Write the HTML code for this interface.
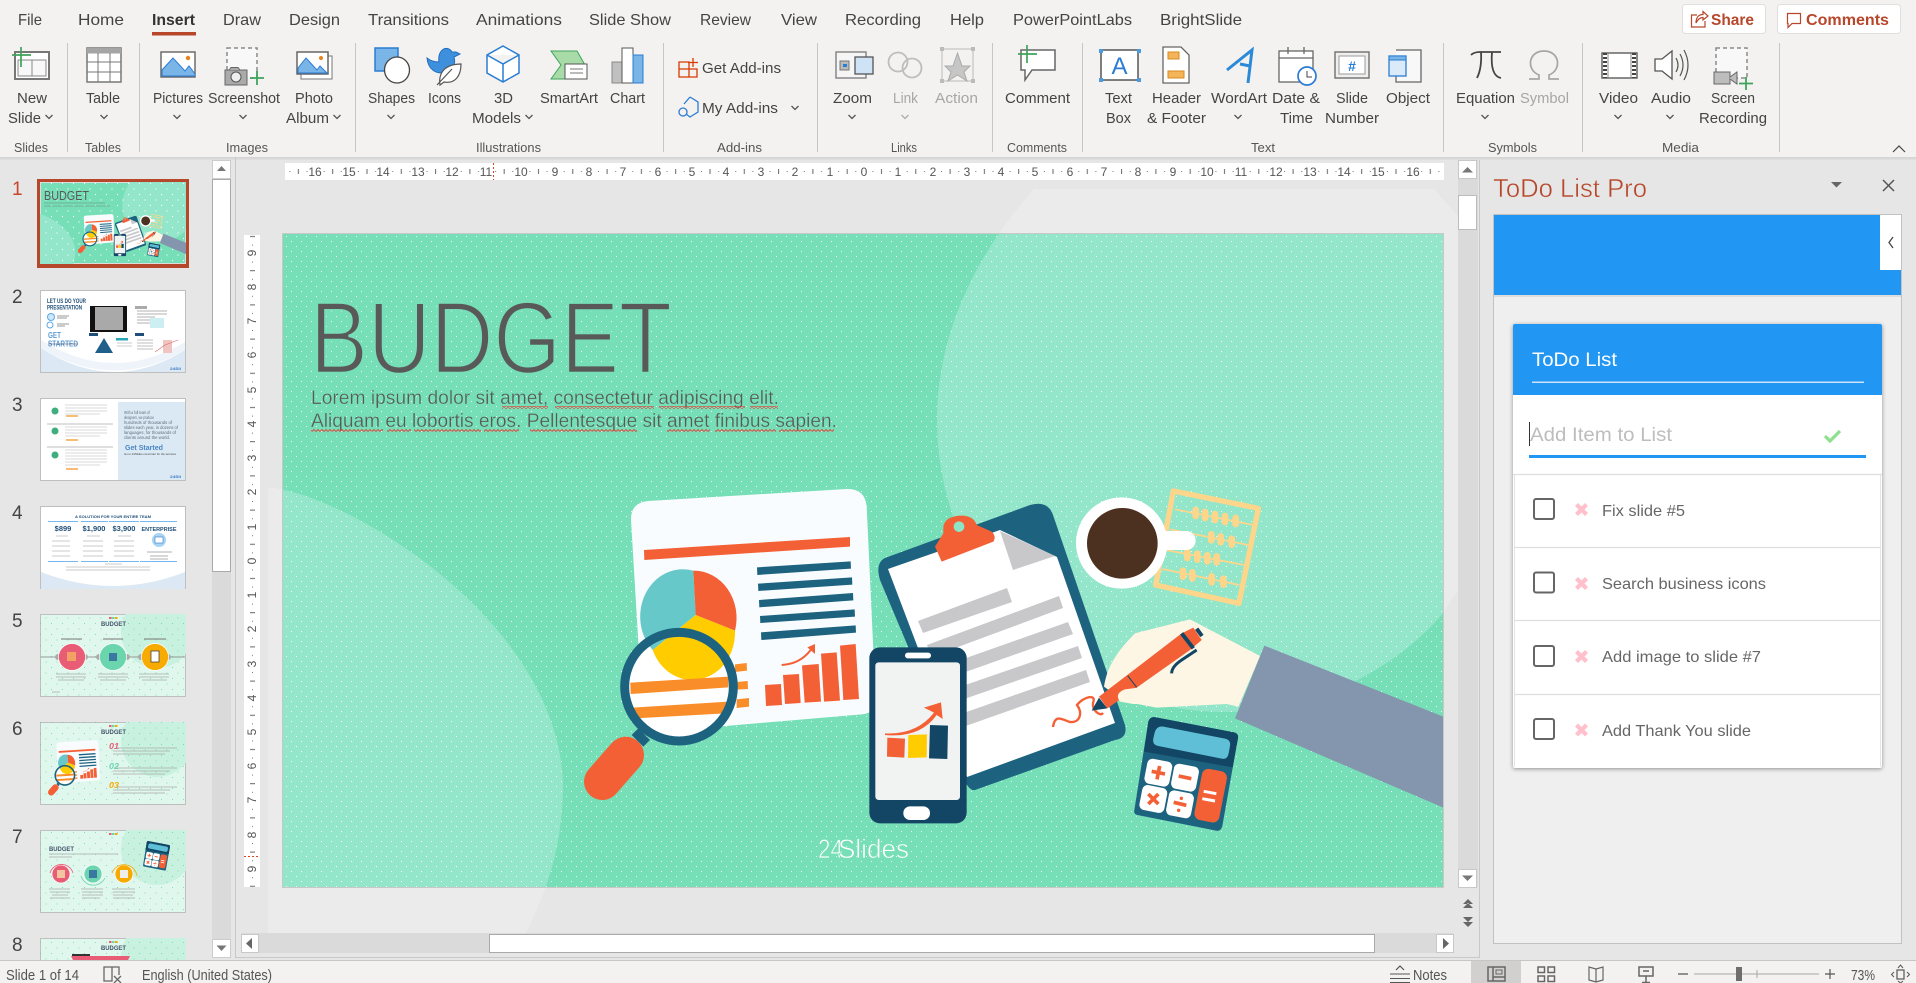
<!DOCTYPE html>
<html lang="en"><head><meta charset="utf-8"><title>ToDo List Pro</title>
<style>
html,body{margin:0;padding:0;background:#e6e6e6;overflow:hidden}
svg{display:block;font-family:"Liberation Sans",sans-serif}
.tab{font-size:16px;fill:#444}
.l{font-size:14.5px;fill:#444}
.d{font-size:14.5px;fill:#a6a6a6}
.g{font-size:13px;fill:#555}
.n{font-size:19px;fill:#444}
.r{font-size:12px;fill:#555;text-anchor:middle}
.i{font-size:16px;fill:#666}
.s{font-size:14.5px;fill:#555}
</style></head><body>
<svg width="1916" height="983" viewBox="0 0 1916 983" xmlns="http://www.w3.org/2000/svg">
<defs>
<path id="ch" d="M-3.5,-2 L0,1.5 L3.5,-2" fill="none" stroke="#555" stroke-width="1.3"/>
<pattern id="dots" width="10" height="10" patternUnits="userSpaceOnUse"><rect x="1" y="1" width="1" height="1" fill="#fff" opacity=".85"/><rect x="6" y="6" width="1" height="1" fill="#fff" opacity=".85"/></pattern>
<pattern id="td1" width="11" height="11" patternUnits="userSpaceOnUse"><circle cx="2" cy="2" r=".6" fill="#fff"/><circle cx="7.5" cy="7.5" r=".6" fill="#fff"/></pattern>
<pattern id="td2" width="11" height="11" patternUnits="userSpaceOnUse"><circle cx="2" cy="2" r=".45" fill="#55d0a6"/><circle cx="7.5" cy="7.5" r=".45" fill="#55d0a6"/></pattern>
<pattern id="sq" width="4" height="3" patternUnits="userSpaceOnUse"><path d="M0,2.5 L2,.5 L4,2.5" fill="none" stroke="#e2403a" stroke-width=".9"/></pattern>
<pattern id="rh" x="864" y="163" width="34.3" height="17" patternUnits="userSpaceOnUse"><rect x="17" y="6" width="1" height="5" fill="#666"/><rect x="8.4" y="8" width="1" height="1" fill="#777"/><rect x="25.6" y="8" width="1" height="1" fill="#777"/></pattern>
<pattern id="rv" x="244" y="561" width="16" height="34.2" patternUnits="userSpaceOnUse"><rect x="6" y="17" width="5" height="1" fill="#666"/><rect x="8" y="8.4" width="1" height="1" fill="#777"/><rect x="8" y="25.6" width="1" height="1" fill="#777"/></pattern>
<clipPath id="sl"><rect x="283" y="234" width="1160" height="653"/></clipPath>
<clipPath id="pb"><rect x="268" y="189" width="1190" height="744"/></clipPath>
<clipPath id="t1"><rect x="40" y="182" width="146" height="82"/></clipPath>
<clipPath id="t5"><rect x="40" y="614" width="146" height="83"/></clipPath>
<clipPath id="t6"><rect x="40" y="722" width="146" height="83"/></clipPath>
<clipPath id="t7"><rect x="40" y="830" width="146" height="83"/></clipPath>
<clipPath id="t8"><rect x="40" y="938" width="146" height="22"/></clipPath>
<clipPath id="t4"><rect x="40" y="506" width="146" height="83"/></clipPath>
<path id="bigS" d="M1034,189 L1434,189 L1458,216 L1458,590 L1444,612 C1400,665 1320,712 1225,712 C1065,712 937,580 937,420 C937,335 975,255 1034,189 Z"/>
<path id="leftS" d="M268,488 C330,488 555,610 563,782 C563,840 550,885 526,933 L268,933 Z"/>
<g id="chart" transform="translate(560,470) scale(.33333)">
 <path d="M213,150 Q212,97 265,93 L860,57 Q915,55 920,110 L947,690 Q948,730 905,733 L300,785 L240,600 Z" fill="#f8fcff"/>
 <circle cx="357" cy="650" r="165" fill="#fff"/>
 <path d="M252,240 L870,201 L870,230 L253,270Z" fill="#f46036"/>
 <path d="M407,435 L278,540 A128,142 0 0 1 400,302 Z" fill="#67c8c9"/>
 <path d="M407,435 L400,302 A128,142 0 0 1 525,482 Z" fill="#f46036"/>
 <path d="M407,435 L525,482 A128,142 0 0 1 278,540 Z" fill="#fc0"/>
 <g fill="#1d6380"><path d="M591,292 L872,274 L873,296 L592,315Z"/><path d="M594,341 L876,322 L877,344 L595,363Z"/><path d="M597,390 L879,369 L880,391 L598,412Z"/><path d="M600,438 L884,418 L885,440 L601,459Z"/><path d="M603,487 L887,466 L888,488 L604,510Z"/></g>
 <g fill="#f98d29"><path d="M525,583 L560,579 L561,602 L525,606Z"/><path d="M530,636 L563,633 L564,657 L530,659Z"/><path d="M530,688 L567,684 L567,710 L530,714Z"/><path d="M211,638 L505,620 L505,652 L212,672Z"/><path d="M219,713 L505,695 L495,730 L225,745Z"/></g>
 <circle cx="357" cy="650" r="163" fill="none" stroke="#1d6380" stroke-width="27"/>
 <path d="M235,775 L270,810 L250,830 L215,795Z" fill="#1d6380"/>
 <line x1="197" y1="855" x2="127" y2="935" stroke="#f46036" stroke-width="110" stroke-linecap="round"/>
 <g fill="#f46036"><path d="M615,645 L663,642 L666,705 L618,708Z"/><path d="M669,615 L717,612 L722,699 L675,702Z"/><path d="M726,586 L776,582 L783,695 L734,698Z"/><path d="M783,551 L830,547 L840,692 L792,695Z"/><path d="M840,527 L887,522 L897,687 L850,690Z"/><path d="M765,522 L765,552 L742,532Z"/></g>
 <path d="M665,585 Q720,582 752,540" fill="none" stroke="#f46036" stroke-width="6"/>
</g>
<g id="board">
 <path d="M885,558 L1030,505 Q1048,500 1053,515 L1125,725 Q1128,738 1115,740 L975,790 Q968,792 960,770 L880,580 Q875,563 885,558 Z" fill="#1d6380"/>
 <path d="M888,569 L1000,530 L1057,557 L1115,723 L967,777 Z" fill="#fff"/>
 <path d="M1000,531 L1055,556 L1013,570Z" fill="#c8c8ca"/>
 <g fill="#c8c8ca"><path d="M918,621 L1007,588 L1012,602 L923,633Z"/><path d="M927,645 L1059,596 L1063,608 L931,657Z"/><path d="M935,669 L1068,622 L1073,634 L940,681Z"/><path d="M945,692 L1078,646 L1082,658 L950,704Z"/><path d="M955,716 L1086,670 L1090,682 L960,728Z"/></g>
 <g transform="translate(560,470) scale(.33333)">
  <path d="M1125,230 L1150,190 L1150,170 Q1155,140 1200,137 Q1240,135 1250,165 L1295,185 Q1310,200 1300,215 L1145,275 Z" fill="#f46036"/>
  <circle cx="1197" cy="170" r="16" fill="#8de5c6"/>
 </g>
 <path d="M1053,727 C1055,713 1063,720 1070,722 C1080,723 1083,713 1077,705 C1083,697 1097,693 1093,703 C1092,710 1100,717 1103,713" fill="none" stroke="#f46036" stroke-width="2.4"/>
</g>
<g id="phone" transform="translate(560,470) scale(.33333)">
 <rect x="928" y="532" width="292" height="528" rx="32" fill="#134665"/>
 <rect x="946" y="577" width="254" height="413" rx="10" fill="#f1f3f2"/>
 <rect x="1035" y="548" width="78" height="17" rx="8" fill="#fff"/>
 <rect x="1030" y="1009" width="80" height="41" rx="20" fill="#fff"/>
 <path d="M982,803 L1035,806 L1033,863 L981,860Z" fill="#f46036"/>
 <path d="M1045,795 L1101,793 L1100,862 L1044,864Z" fill="#fc0"/>
 <path d="M1110,765 L1164,767 L1162,867 L1107,865Z" fill="#134665"/>
 <path d="M975,790 Q1070,795 1122,728 L1092,713 L1143,697 L1148,747 L1130,735 Q1080,805 975,795Z" fill="#f46036"/>
</g>
<g id="rest" transform="translate(1000,470) scale(.33333)">
 <path d="M520,63 L775,115 L717,400 L467,345Z" fill="none" stroke="#fdd68b" stroke-width="16" stroke-linejoin="round"/>
 <g stroke="#fdd68b" stroke-width="5"><path d="M525,118 L760,165M510,178 L745,225M497,240 L732,285M487,297 L718,345"/></g>
 <g stroke="#fdd68b" stroke-width="20" stroke-linecap="round"><path d="M587,120v18M615,126v18M645,132v18M675,138v18M707,144v18M634,193v18M662,199v18M695,206v18M562,246v18M592,251v18M622,256v18M650,259v18M549,302v18M577,307v18M635,319v18M670,326v18"/></g>
 <circle cx="365" cy="219" r="137" fill="#fff"/>
 <rect x="470" y="183" width="117" height="57" rx="28" fill="#fff"/>
 <circle cx="367" cy="220" r="106" fill="#4d3120"/>
 <path d="M312,650 C320,600 340,555 405,490 L570,448 L780,558 L715,710 L680,702 L470,713 L385,697 L340,670Z" fill="#fef6e4"/>
 <path d="M793,527 L1330,740 L1330,1013 L705,745Z" fill="#8495ae"/>
 <path d="M297,680 L545,490 L580,473 L605,510 L570,540 L322,715Z" fill="#f46036"/>
 <path d="M275,722 L297,683 L322,715Z" fill="#134665"/>
 <path d="M545,490 L580,535M590,476 L606,498" stroke="#134665" stroke-width="12" fill="none"/>
 <path d="M383,617 L410,652" stroke="#134665" stroke-width="3" fill="none"/>
 <path d="M590,540 L545,570 Q515,590 515,610" stroke="#134665" stroke-width="9" fill="none"/>
 <path d="M360,695 Q342,670 375,658 L515,640 L520,700 L400,702Z" fill="#fef6e4"/>
</g>
<g id="calc" transform="translate(1000,470) scale(.33333)">
 <path d="M468,742 L702,787 Q716,790 714,804 L667,1068 Q663,1085 648,1082 L412,1035 Q400,1032 403,1020 L445,755 Q450,738 468,742Z" fill="#1d6380"/>
 <path d="M468,742 L702,787 Q716,790 714,804 L698,892 L432,845 L445,755 Q450,738 468,742Z" fill="#134665"/>
 <path d="M490,770 L675,806 Q693,810 690,828 L686,850 Q682,870 665,866 L475,828 Q456,824 460,805 L464,788 Q470,767 490,770Z" fill="#5ebfd6"/>
 <g fill="#fff"><rect x="-38" y="-38" width="76" height="76" rx="16" transform="translate(475,908) rotate(11)"/><rect x="-38" y="-38" width="76" height="76" rx="16" transform="translate(555,923) rotate(11)"/><rect x="-38" y="-38" width="76" height="76" rx="16" transform="translate(460,987) rotate(11)"/><rect x="-38" y="-38" width="76" height="76" rx="16" transform="translate(540,1003) rotate(11)"/></g>
 <rect x="-38" y="-78" width="76" height="156" rx="20" fill="#f46036" transform="translate(632,977) rotate(11)"/>
 <g stroke="#f46036" stroke-width="11" fill="none"><path d="M455,904 L495,912M479,888 L471,928M536,918 L574,926M445,972 L475,1002M475,972 L445,1002M521,997 L559,1006"/></g>
 <circle cx="544" cy="985" r="5" fill="#f46036"/><circle cx="536" cy="1021" r="5" fill="#f46036"/>
 <path d="M611,964 L649,971M607,986 L645,993" stroke="#fff" stroke-width="9"/>
</g>
</defs>

<!-- base -->
<rect width="1916" height="983" fill="#e6e6e6"/>

<!-- ribbon -->
<rect width="1916" height="157" fill="#f3f2f1"/>
<rect y="157" width="1916" height="1.5" fill="#d4d4d4"/><rect y="158.5" width="1916" height="1.5" fill="#dedede"/>
<g class="tabs">
<text class="tab" x="18" y="25" textLength="24" lengthAdjust="spacingAndGlyphs">File</text>
<text class="tab" x="78" y="25" textLength="46" lengthAdjust="spacingAndGlyphs">Home</text>
<text class="tab" x="152" y="25" textLength="43" lengthAdjust="spacingAndGlyphs" style="font-weight:bold;fill:#333">Insert</text>
<text class="tab" x="223" y="25" textLength="38" lengthAdjust="spacingAndGlyphs">Draw</text>
<text class="tab" x="289" y="25" textLength="51" lengthAdjust="spacingAndGlyphs">Design</text>
<text class="tab" x="368" y="25" textLength="81" lengthAdjust="spacingAndGlyphs">Transitions</text>
<text class="tab" x="476" y="25" textLength="86" lengthAdjust="spacingAndGlyphs">Animations</text>
<text class="tab" x="589" y="25" textLength="82" lengthAdjust="spacingAndGlyphs">Slide Show</text>
<text class="tab" x="700" y="25" textLength="51" lengthAdjust="spacingAndGlyphs">Review</text>
<text class="tab" x="781" y="25" textLength="36" lengthAdjust="spacingAndGlyphs">View</text>
<text class="tab" x="845" y="25" textLength="76" lengthAdjust="spacingAndGlyphs">Recording</text>
<text class="tab" x="950" y="25" textLength="34" lengthAdjust="spacingAndGlyphs">Help</text>
<text class="tab" x="1013" y="25" textLength="119" lengthAdjust="spacingAndGlyphs">PowerPointLabs</text>
<text class="tab" x="1160" y="25" textLength="82" lengthAdjust="spacingAndGlyphs">BrightSlide</text>
</g>
<rect x="152" y="32" width="44" height="3.5" fill="#b7472a"/>

<!-- group separators -->
<path d="M67.5,43V152M139.5,43V152M355.5,43V152M663.5,43V152M817.5,43V152M992.5,43V152M1082.5,43V152M1443.5,43V152M1582.5,43V152M1779.5,43V152" stroke="#c8c6c4"/>

<!-- labels -->
<text class="l" x="17" y="103" textLength="30" lengthAdjust="spacingAndGlyphs">New</text>
<text class="l" x="8" y="123" textLength="33" lengthAdjust="spacingAndGlyphs">Slide</text>
<use href="#ch" x="49" y="117"/>
<text class="g" x="14" y="152" textLength="34" lengthAdjust="spacingAndGlyphs">Slides</text>
<text class="l" x="86" y="103" textLength="34" lengthAdjust="spacingAndGlyphs">Table</text><use href="#ch" x="104" y="117"/>
<text class="g" x="85" y="152" textLength="36" lengthAdjust="spacingAndGlyphs">Tables</text>
<text class="l" x="153" y="103" textLength="50" lengthAdjust="spacingAndGlyphs">Pictures</text><use href="#ch" x="177" y="117"/>
<text class="l" x="208" y="103" textLength="72" lengthAdjust="spacingAndGlyphs">Screenshot</text><use href="#ch" x="243" y="117"/>
<text class="l" x="295" y="103" textLength="38" lengthAdjust="spacingAndGlyphs">Photo</text>
<text class="l" x="286" y="123" textLength="43" lengthAdjust="spacingAndGlyphs">Album</text><use href="#ch" x="337" y="117"/>
<text class="g" x="226" y="152" textLength="42" lengthAdjust="spacingAndGlyphs">Images</text>
<text class="l" x="368" y="103" textLength="47" lengthAdjust="spacingAndGlyphs">Shapes</text><use href="#ch" x="391" y="117"/>
<text class="l" x="428" y="103" textLength="33" lengthAdjust="spacingAndGlyphs">Icons</text>
<text class="l" x="494" y="103" textLength="19" lengthAdjust="spacingAndGlyphs">3D</text>
<text class="l" x="472" y="123" textLength="49" lengthAdjust="spacingAndGlyphs">Models</text><use href="#ch" x="529" y="117"/>
<text class="l" x="540" y="103" textLength="58" lengthAdjust="spacingAndGlyphs">SmartArt</text>
<text class="l" x="610" y="103" textLength="35" lengthAdjust="spacingAndGlyphs">Chart</text>
<text class="g" x="476" y="152" textLength="65" lengthAdjust="spacingAndGlyphs">Illustrations</text>
<text class="l" x="702" y="73" textLength="79" lengthAdjust="spacingAndGlyphs">Get Add-ins</text>
<text class="l" x="702" y="113" textLength="76" lengthAdjust="spacingAndGlyphs">My Add-ins</text><use href="#ch" x="795" y="108"/>
<text class="g" x="717" y="152" textLength="45" lengthAdjust="spacingAndGlyphs">Add-ins</text>
<text class="l" x="833" y="103" textLength="39" lengthAdjust="spacingAndGlyphs">Zoom</text><use href="#ch" x="852" y="117"/>
<text class="d" x="893" y="103" textLength="25" lengthAdjust="spacingAndGlyphs">Link</text><use href="#ch" x="905" y="117" opacity=".45"/>
<text class="d" x="935" y="103" textLength="43" lengthAdjust="spacingAndGlyphs">Action</text>
<text class="g" x="891" y="152" textLength="26" lengthAdjust="spacingAndGlyphs">Links</text>
<text class="l" x="1005" y="103" textLength="65" lengthAdjust="spacingAndGlyphs">Comment</text>
<text class="g" x="1007" y="152" textLength="60" lengthAdjust="spacingAndGlyphs">Comments</text>
<text class="l" x="1105" y="103" textLength="27" lengthAdjust="spacingAndGlyphs">Text</text>
<text class="l" x="1106" y="123" textLength="25" lengthAdjust="spacingAndGlyphs">Box</text>
<text class="l" x="1152" y="103" textLength="49" lengthAdjust="spacingAndGlyphs">Header</text>
<text class="l" x="1147" y="123" textLength="59" lengthAdjust="spacingAndGlyphs">&amp; Footer</text>
<text class="l" x="1211" y="103" textLength="56" lengthAdjust="spacingAndGlyphs">WordArt</text><use href="#ch" x="1238" y="117"/>
<text class="l" x="1272" y="103" textLength="48" lengthAdjust="spacingAndGlyphs">Date &amp;</text>
<text class="l" x="1280" y="123" textLength="33" lengthAdjust="spacingAndGlyphs">Time</text>
<text class="l" x="1336" y="103" textLength="32" lengthAdjust="spacingAndGlyphs">Slide</text>
<text class="l" x="1325" y="123" textLength="54" lengthAdjust="spacingAndGlyphs">Number</text>
<text class="l" x="1386" y="103" textLength="44" lengthAdjust="spacingAndGlyphs">Object</text>
<text class="g" x="1251" y="152" textLength="24" lengthAdjust="spacingAndGlyphs">Text</text>
<text class="l" x="1456" y="103" textLength="59" lengthAdjust="spacingAndGlyphs">Equation</text><use href="#ch" x="1485" y="117"/>
<text class="d" x="1520" y="103" textLength="49" lengthAdjust="spacingAndGlyphs">Symbol</text>
<text class="g" x="1488" y="152" textLength="49" lengthAdjust="spacingAndGlyphs">Symbols</text>
<text class="l" x="1599" y="103" textLength="39" lengthAdjust="spacingAndGlyphs">Video</text><use href="#ch" x="1618" y="117"/>
<text class="l" x="1651" y="103" textLength="40" lengthAdjust="spacingAndGlyphs">Audio</text><use href="#ch" x="1670" y="117"/>
<text class="l" x="1711" y="103" textLength="44" lengthAdjust="spacingAndGlyphs">Screen</text>
<text class="l" x="1699" y="123" textLength="68" lengthAdjust="spacingAndGlyphs">Recording</text>
<text class="g" x="1662" y="152" textLength="37" lengthAdjust="spacingAndGlyphs">Media</text>
<path d="M1893,152 L1899,146 L1905,152" fill="none" stroke="#444" stroke-width="1.2"/>

<!-- Share / Comments -->
<rect x="1682.5" y="4.5" width="83" height="29" rx="3" fill="#fff" stroke="#e1dfdd"/>
<rect x="1777.5" y="4.5" width="123" height="29" rx="3" fill="#fff" stroke="#e1dfdd"/>
<path d="M1697,15H1691.5V27H1705V21M1696,23C1696,17 1699,14.500 1703,14.500V11.500L1708,16L1703,20V17.500C1700,17.500 1698,19 1696,23Z" fill="none" stroke="#b7472a" stroke-width="1.2"/>
<text x="1711" y="25" font-size="16" font-weight="bold" fill="#b7472a" textLength="43" lengthAdjust="spacingAndGlyphs">Share</text>
<path d="M1787.500,13.500H1800.500V23.500H1792L1788,27.500V23.500H1787.500Z" fill="none" stroke="#b7472a" stroke-width="1.2"/>
<text x="1806" y="25" font-size="16" font-weight="bold" fill="#b7472a" textLength="83" lengthAdjust="spacingAndGlyphs">Comments</text>

<!-- Ribbon icons -->
<g fill="none">
 <!-- new slide -->
 <rect x="15" y="52" width="34" height="27" fill="#fff" stroke="#777" stroke-width="2"/>
 <path d="M18,60H46V76H18ZM32,60V76" stroke="#888" fill="#f8f8f8"/>
 <path d="M21,47V67M12,55H31" stroke="#3fa45b" stroke-width="1.7"/>
 <!-- table -->
 <rect x="87" y="48" width="34" height="34" fill="#fff" stroke="#777" stroke-width="1.5"/>
 <rect x="87" y="48" width="34" height="5.500" fill="#a5a5a5"/>
 <path d="M98,53V82M110,53V82M87,62H121M87,72H121" stroke="#777"/>
 <!-- pictures -->
 <rect x="161" y="52" width="34" height="25" fill="#fff" stroke="#6d6d6d" stroke-width="1.5"/>
 <path d="M162,75V70L173,58L185,71L189,66L195,74V76H162Z" fill="#7ab5e8" stroke="#2b7cd3"/>
 <circle cx="188" cy="58" r="2.200" fill="#e8821e"/>
 <!-- screenshot -->
 <rect x="227" y="48" width="30" height="30" fill="#f8f8f8" stroke="#8a8a8a" stroke-width="1.500" stroke-dasharray="4 3"/>
 <rect x="225" y="70" width="22" height="15" fill="#aaa" stroke="#666"/>
 <path d="M229,70l2,-2.500h7l2,2.500" fill="#aaa" stroke="#666"/>
 <circle cx="236" cy="77" r="5" fill="#eee" stroke="#555"/>
 <path d="M257,71V85M250,78H264" stroke="#3fa45b" stroke-width="1.800"/>
 <!-- photo album -->
 <path d="M327,56H332V79H301V74" fill="#fff" stroke="#777"/>
 <rect x="297" y="52" width="31" height="22" fill="#fff" stroke="#666" stroke-width="1.500"/>
 <path d="M298,72V68L306,58L317,70L320,66L327,73H298Z" fill="#7ab5e8" stroke="#2b7cd3"/>
 <circle cx="321" cy="58" r="2" fill="#e8821e"/>
 <!-- shapes -->
 <rect x="375" y="48" width="23" height="23" fill="#7ab5e8" stroke="#2b7cd3" stroke-width="1.500"/>
 <ellipse cx="397" cy="70" rx="12.500" ry="13" fill="#fff" stroke="#444" stroke-width="1.300"/>
 <!-- icons -->
 <path d="M427,58 Q432,62 439,62 C437,50 447,44 452,52 L456,52 L460,54 L454,57 C456,64 453,70 446,72 C437,75 428,70 427,58Z" fill="#3f90dc" stroke="#1f6fc0"/>
 <path d="M440,85 C438,72 446,64 461,64 C461,76 455,84 444,82 Z M437,85 L452,69" fill="#fff" stroke="#555" stroke-width="1.200"/>
 <!-- 3D -->
 <path d="M503,46 L519,55 L519,73 L503,82 L487,73 L487,55Z M487,55 L503,64 L519,55 M503,64V82" fill="#fff" stroke="#2b7cd3" stroke-width="1.500"/>
 <!-- smartart -->
 <path d="M551,51H577L585,65L577,79H551L561,65Z" fill="#a9dba9" stroke="#3fa45b"/>
 <rect x="565" y="64" width="22" height="15" fill="#fff" stroke="#555"/>
 <path d="M570,69H583M570,73H583" stroke="#777"/>
 <!-- chart -->
 <rect x="612" y="62" width="10" height="21" fill="#c0c0c0" stroke="#888"/>
 <rect x="622" y="48" width="11" height="35" fill="#fff" stroke="#555"/>
 <rect x="633" y="55" width="10" height="28" fill="#7ab5e8" stroke="#2b7cd3"/>
 <!-- add-ins -->
 <path d="M679,62H689V77H679ZM679,69H697V77H689" stroke="#d83b01" stroke-width="1.300"/>
 <path d="M693,58V67M688,62.500H698" stroke="#d83b01" stroke-width="1.300"/>
 <path d="M690,97 L698,102 L698,112 L690,117 L686,114" stroke="#2b7cd3" stroke-width="1.300"/>
 <path d="M684,104 L690,97" stroke="#2b7cd3" stroke-width="1.300"/>
 <circle cx="683" cy="112" r="4" stroke="#2b7cd3" stroke-width="1.300"/>
 <!-- zoom -->
 <rect x="836" y="52" width="30" height="26" fill="#f5f5f5" stroke="#888" stroke-width="1.500"/>
 <rect x="855" y="57" width="18" height="17" fill="#cfe3f7" stroke="#555" stroke-width="1.300"/>
 <rect x="840" y="61" width="9" height="9" fill="#bbb" stroke="#777"/>
 <rect x="843" y="64" width="4" height="3" fill="#2b7cd3"/>
 <!-- link -->
 <circle cx="898" cy="62" r="9.500" stroke="#bdbdbd" stroke-width="1.800"/>
 <circle cx="912" cy="68" r="9.500" stroke="#bdbdbd" stroke-width="1.800"/>
 <!-- action -->
 <rect x="942" y="49" width="31" height="32" stroke="#bbb"/>
 <path d="M940,47h4v4h-4zM971,47h4v4h-4zM940,79h4v4h-4zM971,79h4v4h-4z" fill="#bbb"/>
 <path d="M957.500,53 L962,66 L970,66 L964,72 L967,81 L957.500,75 L948,81 L951,72 L945,66 L953,66Z" fill="#c6c6c6" stroke="#aaa"/>
 <!-- comment -->
 <path d="M1021,50H1055V70H1032L1025,80V70H1021Z" fill="#fff" stroke="#666" stroke-width="1.500"/>
 <path d="M1027,45V63M1018,54H1037" stroke="#3fa45b" stroke-width="1.700"/>
 <!-- text box -->
 <rect x="1101" y="50" width="37" height="30" fill="#fff" stroke="#555" stroke-width="1.500"/>
 <path d="M1099,49h4v4h-4zM1137,49h4v4h-4zM1099,78h4v4h-4zM1137,78h4v4h-4z" fill="#4a9be0"/>
 <!-- header -->
 <path d="M1163,47H1181L1189,55V83H1163Z" fill="#fff" stroke="#666" stroke-width="1.300"/>
 <rect x="1168" y="52" width="11" height="7" fill="#f3b45a" stroke="#d88a1e"/>
 <rect x="1168" y="71" width="16" height="7" fill="#f3b45a" stroke="#d88a1e"/>
 <!-- wordart -->
 <path d="M1227,70 L1252,50 L1248,83 M1240,64 L1250,66" stroke="#2b8ad8" stroke-width="3"/>
 <!-- date -->
 <rect x="1279" y="51" width="34" height="31" fill="#fff" stroke="#666" stroke-width="1.300"/>
 <path d="M1279,58H1313M1288,47V54M1304,47V54" stroke="#666" stroke-width="1.300"/>
 <circle cx="1307" cy="76" r="9" fill="#fff" stroke="#2b7cd3" stroke-width="1.700"/>
 <path d="M1307,71V77H1312" stroke="#444"/>
 <!-- number -->
 <rect x="1335" y="52" width="34" height="26" fill="#efefef" stroke="#777" stroke-width="1.500"/>
 <rect x="1339" y="56" width="26" height="18" fill="#fff" stroke="#999"/>
 <!-- object -->
 <path d="M1396,50 H1421 V82 H1396 V76" fill="#f8f8f8" stroke="#666" stroke-width="1.300"/>
 <rect x="1389" y="56" width="17" height="20" fill="#dbeaf9" stroke="#2b7cd3" stroke-width="1.300"/>
 <rect x="1389" y="56" width="17" height="4" fill="#7ab5e8" stroke="#2b7cd3"/>
 <!-- pi -->
 <path d="M1471,55 Q1474,52 1480,52 H1501 M1481,52 Q1482,68 1477,78 M1492,52 Q1490,76 1501,78" stroke="#444" stroke-width="1.800"/>
 <!-- omega -->
 <path d="M1529,79 H1539 V75 C1526,70 1528,51 1544,51 C1560,51 1562,70 1549,75 V79 H1559" stroke="#a6a6a6" stroke-width="1.700"/>
 <!-- video -->
 <rect x="1602" y="53" width="35" height="25" fill="#fff" stroke="#666" stroke-width="1.500"/>
 <path d="M1605,53V78M1634,53V78" stroke="#444" stroke-width="4" stroke-dasharray="2 2"/>
 <path d="M1608,53V78M1631,53V78" stroke="#888"/>
 <!-- audio -->
 <path d="M1655,59H1662L1672,51V79L1662,71H1655Z" fill="#fff" stroke="#555" stroke-width="1.300"/>
 <path d="M1676,58Q1680,65 1676,72M1680,54Q1686,65 1680,76M1684,50Q1692,65 1684,80" stroke="#555" stroke-width="1.200"/>
 <!-- screen rec -->
 <rect x="1716" y="48" width="31" height="30" fill="#f8f8f8" stroke="#8a8a8a" stroke-width="1.500" stroke-dasharray="4 3"/>
 <rect x="1714" y="72" width="16" height="12" fill="#bdbdbd" stroke="#666"/>
 <path d="M1730,77 L1737,72 V84 L1730,79" fill="#bdbdbd" stroke="#666"/>
 <path d="M1746,77V90M1739,83.500H1753" stroke="#3fa45b" stroke-width="1.800"/>
</g>
<text x="1119.500" y="74" font-size="24" fill="#2b7cd3" text-anchor="middle">A</text>
<text x="1352" y="71" font-size="14" font-weight="bold" fill="#2b7cd3" text-anchor="middle">#</text>

<!-- Main pasteboard -->
<g clip-path="url(#pb)" fill="#ebebeb"><use href="#bigS"/><use href="#leftS"/></g>

<!-- rulers -->
<rect x="285" y="163" width="1159" height="17" fill="#fff"/>
<rect x="285" y="163" width="1159" height="17" fill="url(#rh)"/>
<g class="rs">
<text class="r" x="315" y="176">16</text><text class="r" x="349" y="176">15</text><text class="r" x="383" y="176">14</text><text class="r" x="418" y="176">13</text><text class="r" x="452" y="176">12</text><text class="r" x="486" y="176">11</text><text class="r" x="521" y="176">10</text><text class="r" x="555" y="176">9</text><text class="r" x="589" y="176">8</text><text class="r" x="623" y="176">7</text><text class="r" x="658" y="176">6</text><text class="r" x="692" y="176">5</text><text class="r" x="726" y="176">4</text><text class="r" x="761" y="176">3</text><text class="r" x="795" y="176">2</text><text class="r" x="830" y="176">1</text><text class="r" x="864" y="176">0</text><text class="r" x="898" y="176">1</text><text class="r" x="933" y="176">2</text><text class="r" x="967" y="176">3</text><text class="r" x="1001" y="176">4</text><text class="r" x="1035" y="176">5</text><text class="r" x="1070" y="176">6</text><text class="r" x="1104" y="176">7</text><text class="r" x="1138" y="176">8</text><text class="r" x="1173" y="176">9</text><text class="r" x="1207" y="176">10</text><text class="r" x="1241" y="176">11</text><text class="r" x="1276" y="176">12</text><text class="r" x="1310" y="176">13</text><text class="r" x="1344" y="176">14</text><text class="r" x="1378" y="176">15</text><text class="r" x="1413" y="176">16</text>
</g>
<path d="M493.500,163V180" stroke="#e04020" stroke-dasharray="2 2"/>
<rect x="244" y="235" width="16" height="652" fill="#fff"/>
<rect x="244" y="235" width="16" height="652" fill="url(#rv)"/>
<g>
<text class="r" transform="translate(256,253) rotate(-90)">9</text><text class="r" transform="translate(256,287) rotate(-90)">8</text><text class="r" transform="translate(256,321) rotate(-90)">7</text><text class="r" transform="translate(256,355) rotate(-90)">6</text><text class="r" transform="translate(256,390) rotate(-90)">5</text><text class="r" transform="translate(256,424) rotate(-90)">4</text><text class="r" transform="translate(256,458) rotate(-90)">3</text><text class="r" transform="translate(256,492) rotate(-90)">2</text><text class="r" transform="translate(256,527) rotate(-90)">1</text><text class="r" transform="translate(256,561) rotate(-90)">0</text><text class="r" transform="translate(256,595) rotate(-90)">1</text><text class="r" transform="translate(256,629) rotate(-90)">2</text><text class="r" transform="translate(256,664) rotate(-90)">3</text><text class="r" transform="translate(256,698) rotate(-90)">4</text><text class="r" transform="translate(256,732) rotate(-90)">5</text><text class="r" transform="translate(256,766) rotate(-90)">6</text><text class="r" transform="translate(256,800) rotate(-90)">7</text><text class="r" transform="translate(256,835) rotate(-90)">8</text><text class="r" transform="translate(256,869) rotate(-90)">9</text>
</g>
<path d="M244,856.500H260" stroke="#e04020" stroke-dasharray="2 2"/>

<!-- Slide -->
<rect x="282.500" y="233.500" width="1161" height="654" fill="#77dfb7" stroke="#c8c8c8"/>
<g clip-path="url(#sl)">
 <g fill="#93e6c9"><use href="#bigS"/><use href="#leftS"/></g>
 <rect x="283" y="234" width="1160" height="653" fill="url(#dots)"/>
 <use href="#chart"/><use href="#board"/><use href="#phone"/><use href="#rest"/><use href="#calc"/>
 <text x="310" y="373" font-size="102" fill="#595959" stroke="#77dfb7" stroke-width="2.400" textLength="362" lengthAdjust="spacingAndGlyphs">BUDGET</text>
 <text x="311" y="404" font-size="19" fill="#595959" stroke="#77dfb7" stroke-width=".3" textLength="468" lengthAdjust="spacingAndGlyphs">Lorem ipsum dolor sit amet, consectetur adipiscing elit.</text>
 <text x="311" y="427" font-size="19" fill="#595959" stroke="#77dfb7" stroke-width=".3" textLength="526" lengthAdjust="spacingAndGlyphs">Aliquam eu lobortis eros. Pellentesque sit amet finibus sapien.</text>
 <g fill="url(#sq)"><rect x="502" y="406" width="46" height="3"/><rect x="555" y="406" width="99" height="3"/><rect x="659" y="406" width="86" height="3"/><rect x="750" y="406" width="28" height="3"/>
 <rect x="311" y="429" width="72" height="3"/><rect x="387" y="429" width="24" height="3"/><rect x="414" y="429" width="67" height="3"/><rect x="484" y="429" width="35" height="3"/><rect x="530" y="429" width="107" height="3"/><rect x="667" y="429" width="43" height="3"/><rect x="715" y="429" width="61" height="3"/><rect x="779" y="429" width="55" height="3"/></g>
 <text x="818" y="858" font-size="27" fill="#fff" stroke="#77dfb7" stroke-width=".7" textLength="25" lengthAdjust="spacingAndGlyphs">24</text>
 <text x="838" y="858" font-size="27" fill="#fff" stroke="#77dfb7" stroke-width=".7" textLength="71" lengthAdjust="spacingAndGlyphs">Slides</text>
</g>

<!-- Main vertical scroll -->
<rect x="1458" y="160" width="20" height="727" fill="#dadada"/>
<rect x="1458.500" y="160.500" width="18" height="18" fill="#fff" stroke="#c8c8c8"/>
<path d="M1462,172.500 L1467.500,167 L1473,172.500Z" fill="#777"/>
<rect x="1458.500" y="195.500" width="18" height="34" fill="#fff" stroke="#bbb"/>
<rect x="1458.500" y="869.500" width="18" height="18" fill="#fff" stroke="#c8c8c8"/>
<path d="M1462,875.500 L1467.500,881 L1473,875.500Z" fill="#777"/>
<path d="M1463,904 L1468,899 L1473,904ZM1463,908 H1473 L1468,903Z M1463,917H1473L1468,922ZM1463,922H1473L1468,927Z" fill="#666"/>
<path d="M1479.500,160V958" stroke="#c8c8c8"/>
<path d="M236,957.500H1480" stroke="#c8c8c8"/>
<!-- Main horizontal scroll -->
<rect x="241" y="933" width="1213" height="20" fill="#dadada"/>
<rect x="241.500" y="934.500" width="17" height="18" fill="#fff" stroke="#c8c8c8"/>
<path d="M252,938 L246,943.500 L252,949Z" fill="#666"/>
<rect x="489.500" y="934.500" width="885" height="18" fill="#fff" stroke="#aaa"/>
<rect x="1436.500" y="934.500" width="17" height="18" fill="#fff" stroke="#c8c8c8"/>
<path d="M1443,938 L1449,943.500 L1443,949Z" fill="#666"/>

<!-- thumbnail panel -->
<path d="M235.500,157V958" stroke="#c8c8c8"/>
<rect x="212" y="160" width="19" height="797" fill="#dadada"/>
<rect x="212.500" y="160.500" width="18" height="18" fill="#fff" stroke="#ccc"/>
<path d="M217,171 L221.500,166 L226,171Z" fill="#777"/>
<rect x="212.500" y="179.500" width="18" height="392" fill="#fff" stroke="#aaa"/>
<rect x="212.500" y="939.500" width="18" height="18" fill="#fff" stroke="#ccc"/>
<path d="M216.500,945.500 L221.500,951 L226.500,945.500Z" fill="#777"/>

<text class="n" x="12" y="195" style="fill:#c8452a">1</text>
<text class="n" x="12" y="303">2</text>
<text class="n" x="12" y="411">3</text>
<text class="n" x="12" y="519">4</text>
<text class="n" x="12" y="627">5</text>
<text class="n" x="12" y="735">6</text>
<text class="n" x="12" y="843">7</text>
<text class="n" x="12" y="951">8</text>

<!-- thumb 1 -->
<rect x="37" y="179" width="152" height="89" fill="#b7472a"/>
<rect x="40" y="182" width="146" height="82" fill="#ddd"/>
<rect x="41" y="183" width="144" height="80" fill="#77dfb7"/>
<g clip-path="url(#t1)">
 <g transform="translate(4.370,152.500) scale(.1259)">
  <g fill="#93e6c9"><use href="#bigS"/><use href="#leftS"/></g>
 </g>
 <rect x="41" y="183" width="144" height="80" fill="url(#td1)"/>
 <g transform="translate(4.370,152.500) scale(.1259)">
  <use href="#chart"/><use href="#board"/><use href="#phone"/><use href="#rest"/><use href="#calc"/>
 </g>
 <text x="44" y="200" font-size="12.500" fill="#595959" textLength="45" lengthAdjust="spacingAndGlyphs">BUDGET</text>
 <path d="M44,203H105M44,206H110" stroke="#6aa58f" stroke-width=".8"/>
</g>

<!-- thumb 2 -->
<rect x="40.500" y="290.500" width="145" height="82" fill="#fff" stroke="#bfbfbf"/>
<path d="M41,348 Q113,395 185,350 V372 H41Z" fill="#dce9f4"/>
<path d="M41,340 Q113,385 185,342 V350 Q113,392 41,348Z" fill="#eef4fa"/>
<text x="47" y="303" font-size="6" font-weight="bold" fill="#1f4e79" textLength="39" lengthAdjust="spacingAndGlyphs">LET US DO YOUR</text>
<text x="47" y="309.500" font-size="6" font-weight="bold" fill="#1f4e79" textLength="35" lengthAdjust="spacingAndGlyphs">PRESENTATION</text>
<circle cx="51" cy="317" r="3.500" fill="#cfe7fb" stroke="#5aa9e6"/><circle cx="50" cy="325" r="3" fill="#fff" stroke="#5aa9e6"/>
<path d="M57,316H69M57,318H67M57,324H69M57,326H65" stroke="#777" stroke-width=".7"/>
<text x="48" y="338" font-size="8.500" font-weight="bold" fill="#5b9bd5" textLength="13" lengthAdjust="spacingAndGlyphs">GET</text>
<text x="48" y="346.500" font-size="8.500" font-weight="bold" fill="#5b9bd5" textLength="30" lengthAdjust="spacingAndGlyphs">STARTED</text>
<path d="M48,344H78" stroke="#445" stroke-width=".6"/>
<rect x="90" y="306" width="37" height="26" fill="#111"/>
<rect x="95" y="307" width="28" height="23" fill="#a9a9a9"/>
<rect x="135" y="306" width="12" height="3" fill="#aaa"/>
<path d="M137,311H167M137,314H167M137,317H155M137,320H152M137,323H152" stroke="#999" stroke-width=".7"/>
<rect x="150" y="318" width="14" height="10" fill="#cdeef2"/>
<rect x="89" y="333" width="45" height="26" fill="#fff"/>
<rect x="89" y="333" width="9" height="3" fill="#1f4e79"/>
<path d="M104,338 L113,353 H95Z" fill="#1f5f8a"/>
<rect x="116" y="338" width="12" height="2.500" fill="#2aa6b4"/>
<path d="M117,343H132M117,346H132" stroke="#ccc"/>
<rect x="135" y="333" width="9" height="3" fill="#1f4e79"/>
<path d="M137,340H153M137,343H153M137,346H153M137,349H153" stroke="#aaa" stroke-width=".7"/>
<rect x="163" y="340" width="9" height="13" fill="#f0c4c0"/>
<path d="M155,352 L165,345 L178,340" stroke="#d66" stroke-width=".6" fill="none"/>
<text x="170" y="370" font-size="4" font-weight="bold" fill="#3a78c2" textLength="11" lengthAdjust="spacingAndGlyphs">24Sli</text>

<!-- thumb 3 -->
<rect x="40.500" y="398.500" width="145" height="82" fill="#fff" stroke="#bfbfbf"/>
<rect x="118" y="402" width="67" height="78" fill="#dbe9f4"/>
<g font-size="4.800" fill="#5f6f7f"><text x="124" y="414" textLength="26" lengthAdjust="spacingAndGlyphs">With a full team of</text><text x="124" y="419" textLength="30" lengthAdjust="spacingAndGlyphs">designers, we produce</text><text x="124" y="424" textLength="48" lengthAdjust="spacingAndGlyphs">hundreds of thousands of</text><text x="124" y="429" textLength="54" lengthAdjust="spacingAndGlyphs">slides each year, in dozens of</text><text x="124" y="434" textLength="52" lengthAdjust="spacingAndGlyphs">languages, for thousands of</text><text x="124" y="439" textLength="46" lengthAdjust="spacingAndGlyphs">clients around the world.</text></g>
<text x="125" y="450" font-size="7.500" font-weight="bold" fill="#4a86c5" textLength="38" lengthAdjust="spacingAndGlyphs">Get Started</text>
<text x="124" y="455" font-size="3" fill="#444" textLength="52" lengthAdjust="spacingAndGlyphs">Go to 24Slides.com/order for the services</text>
<text x="170" y="478" font-size="4" font-weight="bold" fill="#3a78c2" textLength="11" lengthAdjust="spacingAndGlyphs">24Sli</text>
<circle cx="55" cy="411" r="3.500" fill="#3fae7f"/><circle cx="55" cy="431" r="3.500" fill="#3fae7f"/><circle cx="55" cy="455" r="3.500" fill="#3fae7f"/>
<path d="M47,424H113M47,447H113" stroke="#aaa" stroke-width=".8"/>
<path d="M65,405H107M65,408H107M65,411H107M65,414H100M65,427H107M65,430H107M65,433H107M65,436H100M65,450H107M65,453H107M65,456H107M65,459H107M65,462H107M65,465H100" stroke="#ccc" stroke-width=".8"/>
<path d="M66,416H78M66,440H78M66,469H78" stroke="#f3a64c" stroke-width="1.600"/>

<!-- thumb 4 -->
<rect x="40.500" y="506.500" width="145" height="82" fill="#fff" stroke="#bfbfbf"/>
<g clip-path="url(#t4)"><path d="M41,572 Q113,600 185,572 V589 H41Z" fill="#dce9f4"/></g>
<text x="75" y="518" font-size="3.800" font-weight="bold" fill="#1f4e79" textLength="76" lengthAdjust="spacingAndGlyphs">A SOLUTION FOR YOUR ENTIRE TEAM</text>
<path d="M48,521.500H78M81,521.500H108M109,521.500H139M140,521.500H177M48,561.500H78M81,561.500H108M109,561.500H139M140,561.500H177" stroke="#78b8f0" stroke-width="1"/>
<g font-size="7.500" font-weight="bold" fill="#1f4e79" text-anchor="middle"><text x="63" y="531">$899</text><text x="94" y="531">$1,900</text><text x="124" y="531">$3,900</text><text x="159" y="531" font-size="5.500" textLength="35" lengthAdjust="spacingAndGlyphs">ENTERPRISE</text></g>
<path d="M56,536H68M87,536H100M118,536H131M52,541H70M83,541H103M114,541H134M52,546H70M83,546H103M114,546H134M52,551H70M83,551H103M114,551H134M52,556H70M83,556H103M114,556H134" stroke="#bbb" stroke-width=".8"/>
<circle cx="159" cy="540" r="7" fill="#a8d4f5"/><rect x="155" y="537" width="8" height="6" fill="#fff" stroke="#3a78c2" stroke-width=".6"/>
<path d="M147,552H172M150,556H168M150,559H168" stroke="#999" stroke-width=".8"/>
<path d="M105,564H122M66,567H150M66,570H150" stroke="#bbb" stroke-width=".8"/>

<!-- thumb 5 -->
<rect x="40.500" y="614.500" width="145" height="82" fill="#e0f7ee" stroke="#bfbfbf"/>
<g clip-path="url(#t5)"><circle cx="157" cy="632" r="36" fill="#c8f2df"/><rect x="40" y="614" width="146" height="83" fill="url(#td2)"/>
 <path d="M41,657H185" stroke="#999" stroke-width=".9"/>
 <g fill="#aaa"><circle cx="58" cy="657" r="3"/><circle cx="85" cy="657" r="3"/><circle cx="99" cy="657" r="3"/><circle cx="127" cy="657" r="3"/><circle cx="141" cy="657" r="3"/><circle cx="168" cy="657" r="3"/></g>
 <circle cx="72" cy="657" r="13.500" fill="#e85d75" stroke="#fff" stroke-width=".7"/><circle cx="113" cy="657" r="13.500" fill="#6bd6ae" stroke="#fff" stroke-width=".7"/><circle cx="155" cy="657" r="13.500" fill="#f7ab00" stroke="#fff" stroke-width=".7"/>
 <rect x="67" y="652" width="9" height="9" fill="#f3a064"/><rect x="109" y="653" width="8" height="8" fill="#3a78a2"/><rect x="151" y="651" width="8" height="11" fill="#fff" stroke="#333" stroke-width=".7"/>
</g>
<rect x="109" y="617" width="2.500" height="2" fill="#e85d75"/><rect x="112" y="617" width="2.500" height="2" fill="#6bd6ae"/><rect x="115" y="617" width="2.500" height="2" fill="#f7ab00"/>
<text x="101" y="626" font-size="6.500" font-weight="bold" fill="#44546a" textLength="25" lengthAdjust="spacingAndGlyphs">BUDGET</text>
<path d="M61,639H82M103,639H123M144,639H166" stroke="#777" stroke-width="1"/>
<path d="M56,674H86M56,677H86M58,680H84M98,674H128M98,677H128M100,680H126M139,674H169M139,677H169M142,680H167M52,692H60" stroke="#aaa" stroke-width=".8"/>

<!-- thumb 6 -->
<rect x="40.500" y="722.500" width="145" height="82" fill="#e0f7ee" stroke="#bfbfbf"/>
<g clip-path="url(#t6)"><circle cx="157" cy="741" r="36" fill="#c8f2df"/><rect x="40" y="722" width="146" height="83" fill="url(#td2)"/>
 <g transform="translate(-55.950,653.140) scale(.178)"><use href="#chart"/></g>
</g>
<rect x="109" y="725" width="2.500" height="2" fill="#e85d75"/><rect x="112" y="725" width="2.500" height="2" fill="#6bd6ae"/><rect x="115" y="725" width="2.500" height="2" fill="#f7ab00"/>
<text x="101" y="734" font-size="6.500" font-weight="bold" fill="#44546a" textLength="25" lengthAdjust="spacingAndGlyphs">BUDGET</text>
<g font-size="8" font-weight="bold" font-style="italic"><text x="109" y="749" fill="#e85d75" textLength="10" lengthAdjust="spacingAndGlyphs">01</text><text x="109" y="769" fill="#6bd6ae" textLength="10" lengthAdjust="spacingAndGlyphs">02</text><text x="109" y="788" fill="#f7ab00" textLength="10" lengthAdjust="spacingAndGlyphs">03</text></g>
<path d="M116,748H177M113,751H170M113,754H165M116,768H177M113,771H170M113,774H165M116,787H177M113,790H170M113,793H165" stroke="#aaa" stroke-width=".8"/>

<!-- thumb 7 -->
<rect x="40.500" y="830.500" width="145" height="82" fill="#e0f7ee" stroke="#bfbfbf"/>
<g clip-path="url(#t7)"><circle cx="157" cy="849" r="36" fill="#c8f2df"/><rect x="40" y="830" width="146" height="83" fill="url(#td2)"/>
 <g transform="translate(-151.840,654.580) scale(.26)"><use href="#calc"/></g>
 <circle cx="61" cy="874" r="9" fill="#e85d75" stroke="#fff" stroke-width=".7"/><circle cx="93" cy="874" r="9" fill="#6bd6ae" stroke="#fff" stroke-width=".7"/><circle cx="124" cy="874" r="9" fill="#f7ab00" stroke="#fff" stroke-width=".7"/>
 <path d="M50,873 A12,12 0 0 1 73,873" fill="none" stroke="#e85d75" stroke-width=".8"/>
 <path d="M81,876 A13,13 0 0 0 105,878" fill="none" stroke="#6bd6ae" stroke-width=".8"/>
 <path d="M112,873 A13,13 0 0 1 137,876" fill="none" stroke="#f7ab00" stroke-width=".8"/>
 <rect x="57" y="870" width="8" height="8" fill="#f3c4a0"/><rect x="89" y="870" width="8" height="8" fill="#3a78a2"/><rect x="120" y="870" width="8" height="8" fill="#eee"/>
</g>
<rect x="109" y="833" width="2.500" height="2" fill="#e85d75"/><rect x="112" y="833" width="2.500" height="2" fill="#6bd6ae"/><rect x="115" y="833" width="2.500" height="2" fill="#f7ab00"/>
<text x="49" y="851" font-size="6.500" font-weight="bold" fill="#44546a" textLength="25" lengthAdjust="spacingAndGlyphs">BUDGET</text>
<path d="M49,854H118M49,857H72M49,889H70M50,892H70M52,895H68M50,898H70M81,889H103M82,892H103M82,895H103M82,898H100M112,889H135M113,892H135M113,895H133M113,898H135" stroke="#aaa" stroke-width=".8"/>

<!-- thumb 8 -->
<rect x="40.500" y="938.500" width="145" height="30" fill="#e0f7ee" stroke="#bfbfbf"/>
<g clip-path="url(#t8)"><circle cx="157" cy="957" r="36" fill="#c8f2df"/><rect x="40" y="938" width="146" height="22" fill="url(#td2)"/>
 <rect x="72" y="954" width="18" height="3" fill="#333"/><path d="M71,956H130L128,960H73Z" fill="#e85d75"/></g>
<rect x="109" y="941" width="2.500" height="2" fill="#e85d75"/><rect x="112" y="941" width="2.500" height="2" fill="#6bd6ae"/><rect x="115" y="941" width="2.500" height="2" fill="#f7ab00"/>
<text x="101" y="950" font-size="6.500" font-weight="bold" fill="#44546a" textLength="25" lengthAdjust="spacingAndGlyphs">BUDGET</text>

<!-- Right panel -->
<text x="1493" y="197" font-size="26" fill="#b7472a" stroke="#e6e6e6" stroke-width=".5" textLength="154" lengthAdjust="spacingAndGlyphs">ToDo List Pro</text>
<path d="M1831,182 H1842 L1836.500,187.500Z" fill="#666"/>
<path d="M1883,180 L1894,191 M1894,180 L1883,191" stroke="#555" stroke-width="1.500"/>
<rect x="1493.500" y="214.500" width="408" height="729" fill="#efefef" stroke="#c2c2c2"/>
<rect x="1494" y="215" width="407" height="80" fill="#2196f3"/>
<rect x="1494" y="295" width="407" height="2" fill="#dcdcdc"/>
<rect x="1880" y="215" width="21" height="55" fill="#fff"/>
<path d="M1893,237 L1889,242.500 L1893,248" fill="none" stroke="#444" stroke-width="1.300"/>
<rect x="1513" y="324" width="369" height="444" rx="2" fill="#fff" style="filter:drop-shadow(0 1px 2px rgba(0,0,0,.4))"/>
<path d="M1515,324H1880Q1882,324 1882,326V395H1513V326Q1513,324 1515,324Z" fill="#2196f3"/>
<text x="1532" y="366" font-size="19" fill="#fff" textLength="85" lengthAdjust="spacingAndGlyphs">ToDo List</text>
<rect x="1532" y="381.500" width="332" height="1.500" fill="#cfe3f7"/>
<text x="1530" y="441" font-size="19.500" fill="#bdbdbd" textLength="142" lengthAdjust="spacingAndGlyphs">Add Item to List</text>
<rect x="1529" y="422" width="1" height="24" fill="#333"/>
<path d="M1825,436 L1830,441 L1840,431" fill="none" stroke="#8ee08e" stroke-width="3.200"/>
<rect x="1529" y="455" width="337" height="3" fill="#2196f3"/>
<path d="M1513,474.500H1882M1514,547.500H1881M1514,620.500H1881M1514,694.500H1881" stroke="#dedede" stroke-width="1.200"/>
<path d="M1514.500,475V767M1880.500,475V767" stroke="#e4e4e4"/>
<g fill="none" stroke="#666" stroke-width="2">
 <rect x="1534" y="499" width="20" height="20" rx="2"/><rect x="1534" y="572.500" width="20" height="20" rx="2"/><rect x="1534" y="646" width="20" height="20" rx="2"/><rect x="1534" y="719" width="20" height="20" rx="2"/>
</g>
<g stroke="#ffc0cb" stroke-width="4.200" fill="none">
 <path d="M1576.500,504.500 L1586.500,514.500M1586.500,504.500 L1576.500,514.500"/>
 <path d="M1576.500,578.500 L1586.500,588.500M1586.500,578.500 L1576.500,588.500"/>
 <path d="M1576.500,651.500 L1586.500,661.500M1586.500,651.500 L1576.500,661.500"/>
 <path d="M1576.500,725 L1586.500,735M1586.500,725 L1576.500,735"/>
</g>
<text class="i" x="1602" y="516" textLength="83" lengthAdjust="spacingAndGlyphs">Fix slide #5</text>
<text class="i" x="1602" y="589" textLength="164" lengthAdjust="spacingAndGlyphs">Search business icons</text>
<text class="i" x="1602" y="662" textLength="159" lengthAdjust="spacingAndGlyphs">Add image to slide #7</text>
<text class="i" x="1602" y="736" textLength="149" lengthAdjust="spacingAndGlyphs">Add Thank You slide</text>

<!-- Status bar -->
<rect y="960" width="1916" height="23" fill="#f3f2f1"/>
<rect y="960" width="1916" height="1" fill="#c8c6c4"/>
<text class="s" x="6" y="980" textLength="73" lengthAdjust="spacingAndGlyphs">Slide 1 of 14</text>
<path d="M104,967H112V981H104ZM112,967H119V975M114,976 L121,983M121,976 L114,983" fill="none" stroke="#666" stroke-width="1.300"/>
<text class="s" x="142" y="980" textLength="130" lengthAdjust="spacingAndGlyphs">English (United States)</text>
<path d="M1390,974H1410M1390,978.500H1410M1390,982.500H1410" stroke="#555" stroke-width="1.100"/>
<path d="M1396,970 L1400,966 L1404,970" fill="none" stroke="#555" stroke-width="1.200"/>
<text class="s" x="1413" y="980" textLength="34" lengthAdjust="spacingAndGlyphs">Notes</text>
<rect x="1471" y="961" width="50" height="22" fill="#d2d0ce"/>
<g fill="none" stroke="#666" stroke-width="1.500">
 <rect x="1488" y="967" width="17" height="14"/><path d="M1493,967V981M1493,977H1505"/><rect x="1496" y="970" width="6" height="4" stroke-width="1"/>
 <rect x="1538" y="967" width="6.500" height="5.500"/><rect x="1548" y="967" width="6.500" height="5.500"/><rect x="1538" y="976" width="6.500" height="5.500"/><rect x="1548" y="976" width="6.500" height="5.500"/>
 <path d="M1596,969 L1589,967V980L1596,982L1603,980V967ZM1596,969V982" stroke-width="1.200"/>
 <rect x="1639" y="967" width="14" height="9"/><path d="M1646,976V982M1642,982.500H1650M1643,971H1649"/>
</g>
<path d="M1678,974H1688M1825,974H1835M1830,969V979" stroke="#555" stroke-width="1.200"/>
<rect x="1694" y="973.500" width="125" height="1" fill="#a6a6a6"/>
<rect x="1756.500" y="970" width="1" height="8" fill="#a6a6a6"/>
<rect x="1736" y="967" width="6" height="14" fill="#6e6e6e"/>
<text class="s" x="1851" y="980" textLength="24" lengthAdjust="spacingAndGlyphs">73%</text>
<rect x="1897" y="970" width="7" height="9" fill="none" stroke="#555" stroke-width="1.200"/>
<path d="M1898,968 L1900.500,965 L1903,968M1898,981 L1900.500,983 L1903,981M1894,972 L1891.500,974.500 L1894,977M1907,972 L1909.500,974.500 L1907,977" fill="none" stroke="#555"/>
</svg>
</body></html>
